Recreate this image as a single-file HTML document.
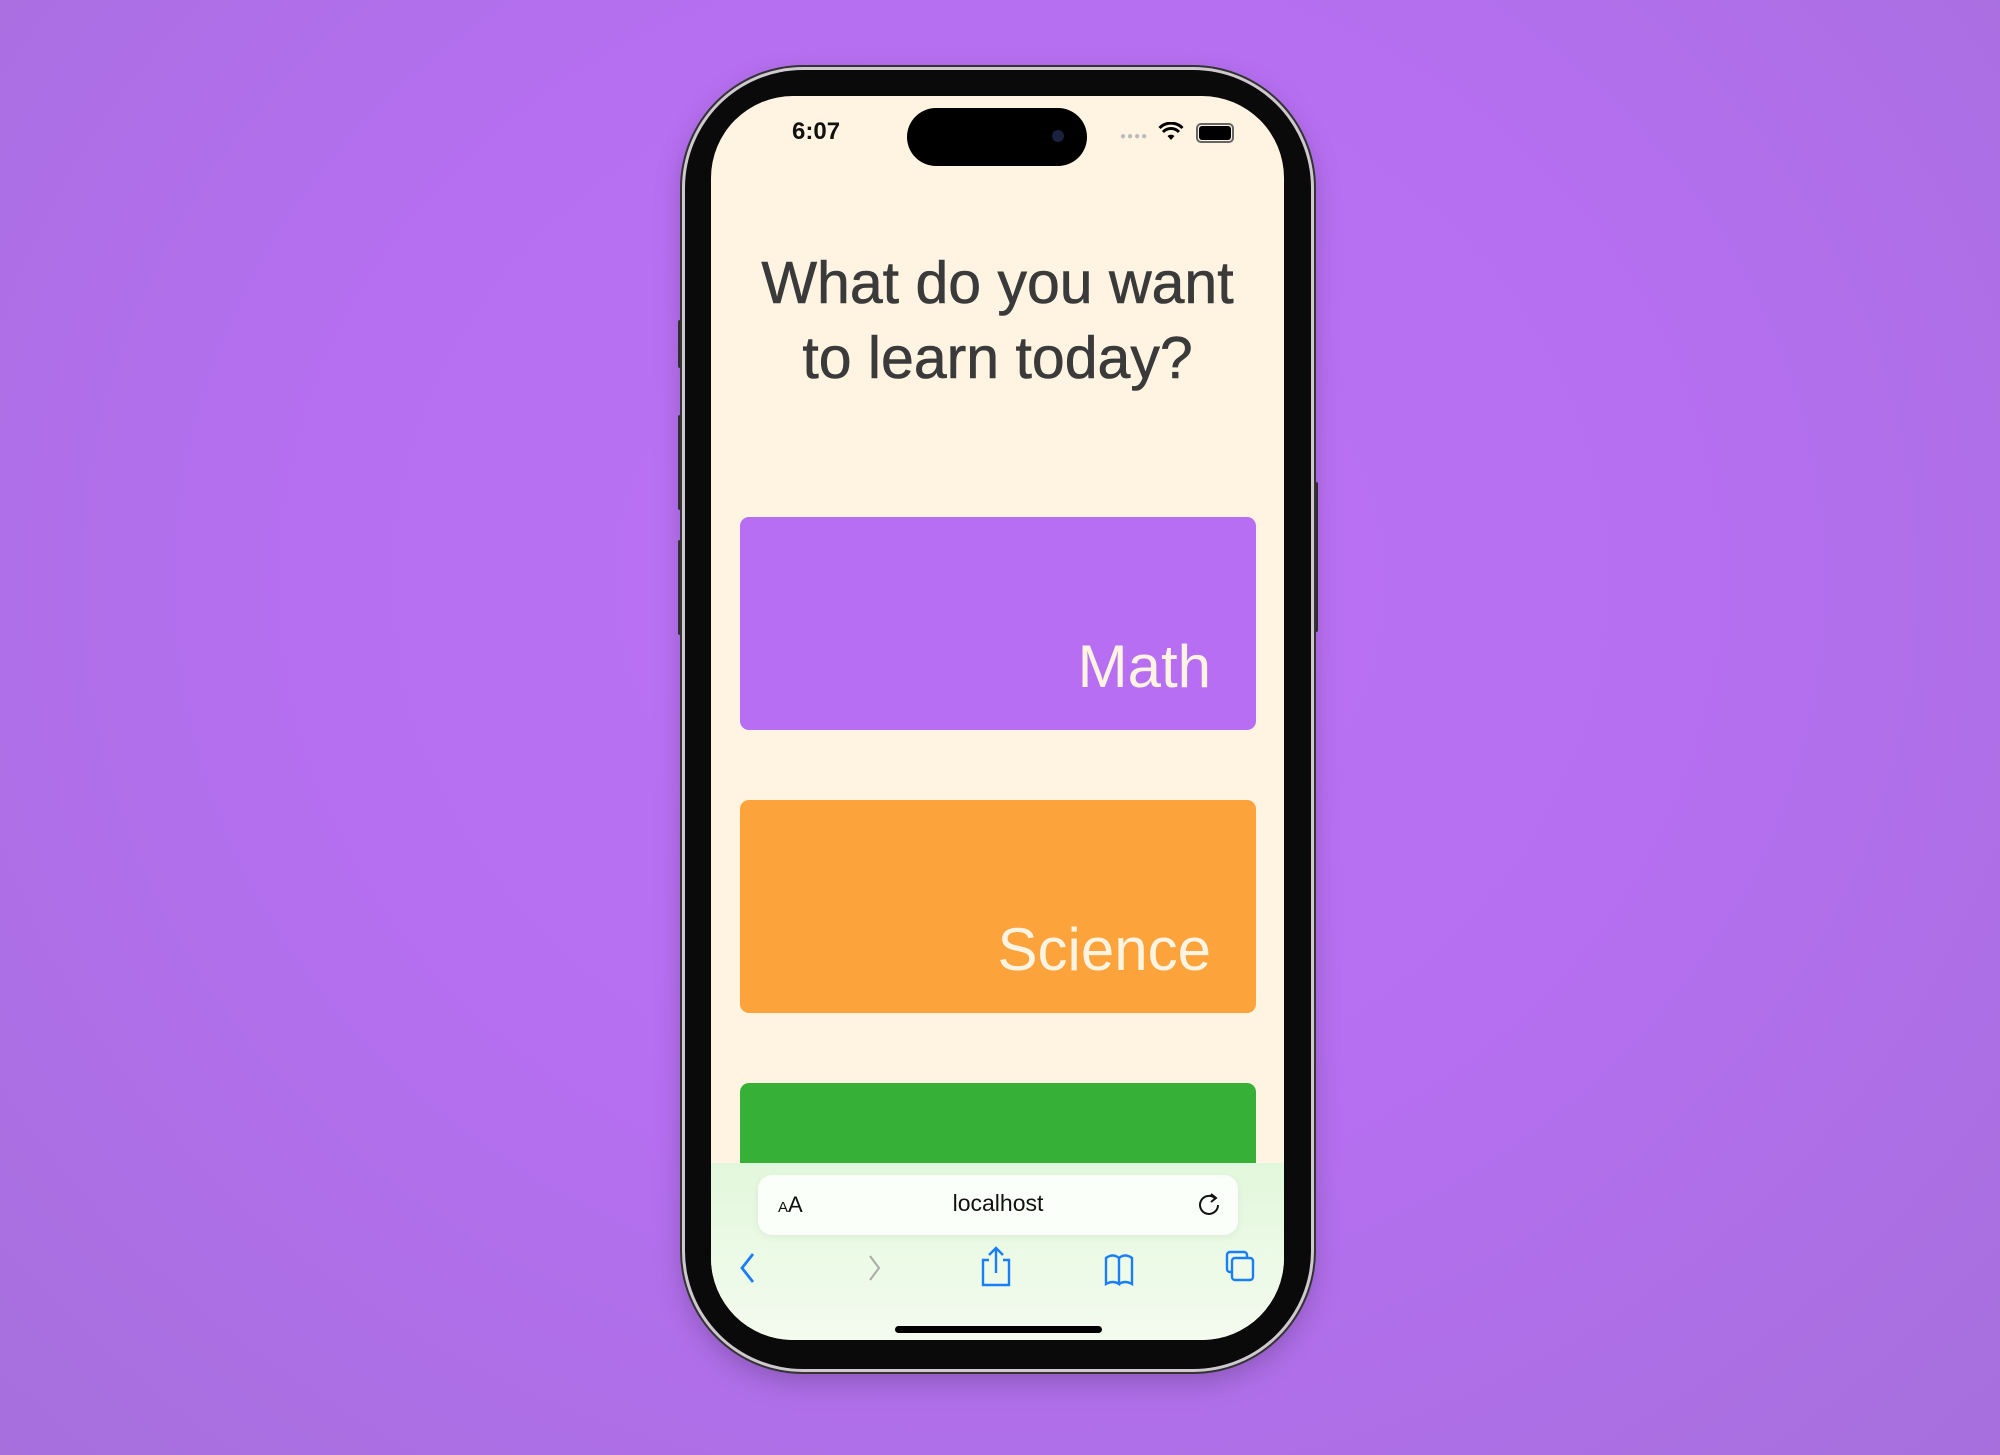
<!DOCTYPE html><html><head><style>
body{margin:0;width:2000px;height:1455px;overflow:hidden;background:radial-gradient(ellipse at 50% 40%,#bd72f6 0%,#b56ff0 50%,#a66fdc 100%);font-family:"Liberation Sans",sans-serif;position:relative}
.phone{position:absolute;left:685px;top:70px;width:626px;height:1299px;border-radius:118px;background:#0a0a0a;box-shadow:0 0 0 3px #cfc9cf,0 0 0 5px #333,0 10px 30px rgba(0,0,0,.25)}
.btn{position:absolute;background:#333;width:6px;border-radius:2px}
.screen{position:absolute;left:711px;top:96px;width:573px;height:1244px;border-radius:82px;background:#fff4e2;overflow:hidden}
.abs{position:absolute}
.card{position:absolute;left:29px;width:516px;height:213px;border-radius:9px;color:#fff4e2;font-size:60px;text-align:right;box-sizing:border-box;padding-right:45px}
</style></head><body>
<div class="btn" style="left:678px;top:320px;height:48px"></div>
<div class="btn" style="left:678px;top:415px;height:95px"></div>
<div class="btn" style="left:678px;top:540px;height:95px"></div>
<div class="btn" style="left:1312px;top:482px;height:150px"></div>
<div class="phone"></div>
<div class="screen">
<div class="abs" style="left:81px;top:22px;font-size:24px;color:#111;font-weight:bold">6:07</div>
<div class="abs" style="left:196px;top:12px;width:180px;height:58px;border-radius:29px;background:#000"></div>
<div class="abs" style="left:341px;top:34px;width:12px;height:12px;border-radius:6px;background:#1a2240"></div>
<div class="abs" style="left:409px;top:35px;font-size:10px;color:#bbb;letter-spacing:1px">●●●●</div>
<svg class="abs" style="left:447px;top:26px" width="26" height="20" viewBox="0 0 26 20"><path d="M13 18l-3.5-4a5 5 0 017 0z" fill="#000"/><path d="M5 10a11 11 0 0116 0M1.5 6a16 16 0 0123 0" stroke="#000" stroke-width="3" fill="none"/></svg>
<div class="abs" style="left:485px;top:27px;width:32px;height:14px;border:2px solid #666;border-radius:5px;padding:1px;box-sizing:content-box"><div style="width:32px;height:14px;background:#000;border-radius:3px"></div></div>
<div class="abs" style="left:0;top:150px;width:573px;text-align:center;font-size:59px;line-height:75px;color:#3a3a3a;-webkit-text-stroke:0.6px #3a3a3a">What do you want<br>to learn today?</div>
<div class="card" style="top:421px;background:#b86ef2;line-height:300px">Math</div>
<div class="card" style="top:704px;background:#fca33c;line-height:300px">Science</div>
<div class="card" style="top:987px;background:#36b037"></div>
<div class="abs" style="left:0;top:1067px;width:573px;height:177px;background:linear-gradient(#e2f8dc,#f4fbef)"></div>
<div class="abs" style="left:47px;top:1079px;width:480px;height:60px;border-radius:14px;background:#fbfff9;box-shadow:0 2px 8px rgba(0,0,0,.06)"></div>
<div class="abs" style="left:67px;top:1096px;font-size:22px;color:#111"><span style="font-size:15px">A</span>A</div>
<div class="abs" style="left:47px;top:1094px;width:480px;text-align:center;font-size:23px;color:#111">localhost</div>
<svg class="abs" style="left:485px;top:1096px" width="26" height="26" viewBox="0 0 26 26"><path d="M19.4 6.6A9 9 0 1022 13" stroke="#111" stroke-width="2" fill="none"/><path d="M15 2l5 4-5 4" stroke="#111" stroke-width="2" fill="none"/></svg>
<svg class="abs" style="left:0;top:1150px" width="573" height="44" viewBox="0 0 573 44" fill="none" stroke-width="2.4">
<path d="M42 8L31 22l11 14" stroke="#1a7ef7" stroke-width="2.8"/>
<path d="M159 10l9 12-9 12" stroke="#aaa" stroke-width="2"/>
<path d="M278 14h-6v25h26V14h-6M285 27V2M278 9l7-7 7 7" stroke="#1a7ef7"/>
<path d="M395 12q7-5 13 0v26q-6-4-13 0zM408 12q6-5 13 0v26q-7-4-13 0" stroke="#1a7ef7"/>
<rect x="516" y="6" width="20" height="20" rx="3" stroke="#1a7ef7"/><rect x="521" y="12" width="21" height="22" rx="3" stroke="#1a7ef7" fill="#f0faeb"/>
</svg>
<div class="abs" style="left:184px;top:1230px;width:207px;height:7px;border-radius:4px;background:#000"></div>
</div>
</body></html>
